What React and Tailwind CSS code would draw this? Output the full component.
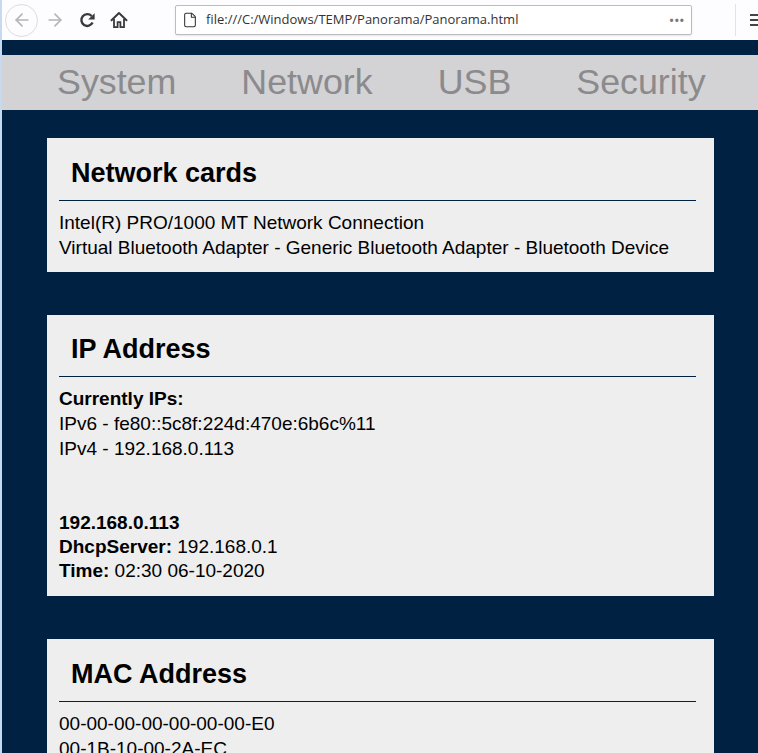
import React from 'react';
import { ArrowLeft, ArrowRight, File } from 'lucide-react';

const NAV_ITEMS = ['System', 'Network', 'USB', 'Security'];

const ReloadIcon = () => (
  <svg width="17" height="17" viewBox="0 0 17 17" className="ml-[14px] shrink-0 text-[#3a3a3a]">
    <path d="M13.6 10.6A5.9 5.9 0 1 1 12.6 4" fill="none" stroke="currentColor" strokeWidth="2.4" />
    <path d="M15.6 1.2v6.4H9.2z" fill="currentColor" />
  </svg>
);

const HomeIcon = () => (
  <svg width="18" height="18" viewBox="0 0 18 18" className="ml-[14px] shrink-0 text-[#3a3a3a]">
    <path d="M1.5 9.2 9 2l7.5 7.2" fill="none" stroke="currentColor" strokeWidth="2" strokeLinecap="round" strokeLinejoin="round" />
    <path d="M4 8v8.2h3.6v-5h2.8v5H14V8" fill="none" stroke="currentColor" strokeWidth="1.8" />
  </svg>
);

const MenuIcon = () => (
  <svg width="14" height="14" viewBox="0 0 14 14" className="ml-[14px] shrink-0 text-[#444444]">
    <path d="M0 2h14M0 7h14M0 12h14" stroke="currentColor" strokeWidth="2" />
  </svg>
);

const Card = ({ title, className = '', titleClass = 'pt-[18px]', ruleClass = 'mt-[17px]', children }) => (
  <section className={`ml-[45px] mr-[44px] bg-[#eeeeee] ${className}`}>
    <h2 className={`ml-[24px] h-[45px] text-[27px] leading-[35px] font-bold text-black ${titleClass}`}>{title}</h2>
    <div className={`ml-[12px] mr-[18px] border-t border-[#002142] ${ruleClass}`} />
    <div className="px-[12px] pt-[9px] text-[19px] text-black">{children}</div>
  </section>
);

const Row = ({ children, className = 'h-[25px] leading-[25px]' }) => (
  <div className={`whitespace-nowrap ${className}`}>{children}</div>
);

const TIGHT = 'h-[24px] leading-[24px]';

const App = () => {
  return (
    <div className="w-[758px] h-[753px] overflow-hidden bg-[#002142] border-l-2 border-[#c5d9f1] font-['Liberation_Sans',Arial,sans-serif]">
      <header className="h-[40px] flex items-center bg-[#fdfcfe] font-['Open_Sans','Noto_Sans',sans-serif]">
        <div className="ml-[3px] shrink-0 w-[33px] h-[33px] rounded-full border border-[#dddddd] flex items-center justify-center text-[#b4b4b4]">
          <ArrowLeft size={20} strokeWidth={2} />
        </div>
        <ArrowRight size={20} strokeWidth={2} className="ml-[7px] shrink-0 text-[#b4b4b4]" />
        <ReloadIcon />
        <HomeIcon />
        <div className="ml-[47px] shrink-0 w-[517px] h-[30px] flex items-center rounded-[2px] border border-[#bdbdbd] bg-white shadow-[0_1px_2px_rgba(0,0,0,0.1)]">
          <File size={16} strokeWidth={1.6} className="ml-[6px] shrink-0 text-[#333333]" />
          <span className="ml-[8px] text-[13px] text-[#333333] whitespace-nowrap">file:///C:/Windows/TEMP/Panorama/Panorama.html</span>
          <span className="ml-auto mr-[6px] text-[11px] font-bold tracking-[1px] text-[#777777]">•••</span>
        </div>
        <div className="ml-[43px] shrink-0 w-px h-[32px] bg-[#e3e3e3]" />
        <MenuIcon />
      </header>

      <nav className="mt-[15px] h-[55px] flex items-center gap-[65px] pl-[55px] bg-[#d3d2d5] text-[35.8px] text-[#8b8a8c]">
        {NAV_ITEMS.map((label) => (
          <span key={label}>{label}</span>
        ))}
      </nav>

      <main className="pt-[28px]">
        <Card title="Network cards" className="h-[134px]">
          <Row>Intel(R) PRO/1000 MT Network Connection</Row>
          <Row>Virtual Bluetooth Adapter - Generic Bluetooth Adapter - Bluetooth Device</Row>
        </Card>

        <Card title="IP Address" className="mt-[43px] h-[281px]" titleClass="pt-[17px]" ruleClass="mt-[16px]">
          <Row><b>Currently IPs:</b></Row>
          <Row>IPv6 - fe80::5c8f:224d:470e:6b6c%11</Row>
          <Row>IPv4 - 192.168.0.113</Row>
          <div className="h-[50px]" />
          <Row className={TIGHT}><b>192.168.0.113</b></Row>
          <Row className={TIGHT}><b>DhcpServer:</b> 192.168.0.1</Row>
          <Row className={TIGHT}><b>Time:</b> 02:30 06-10-2020</Row>
        </Card>

        <Card title="MAC Address" className="mt-[43px] h-[200px]">
          <Row>00-00-00-00-00-00-00-E0</Row>
          <Row>00-1B-10-00-2A-EC</Row>
        </Card>
      </main>
    </div>
  );
};

export default App;
